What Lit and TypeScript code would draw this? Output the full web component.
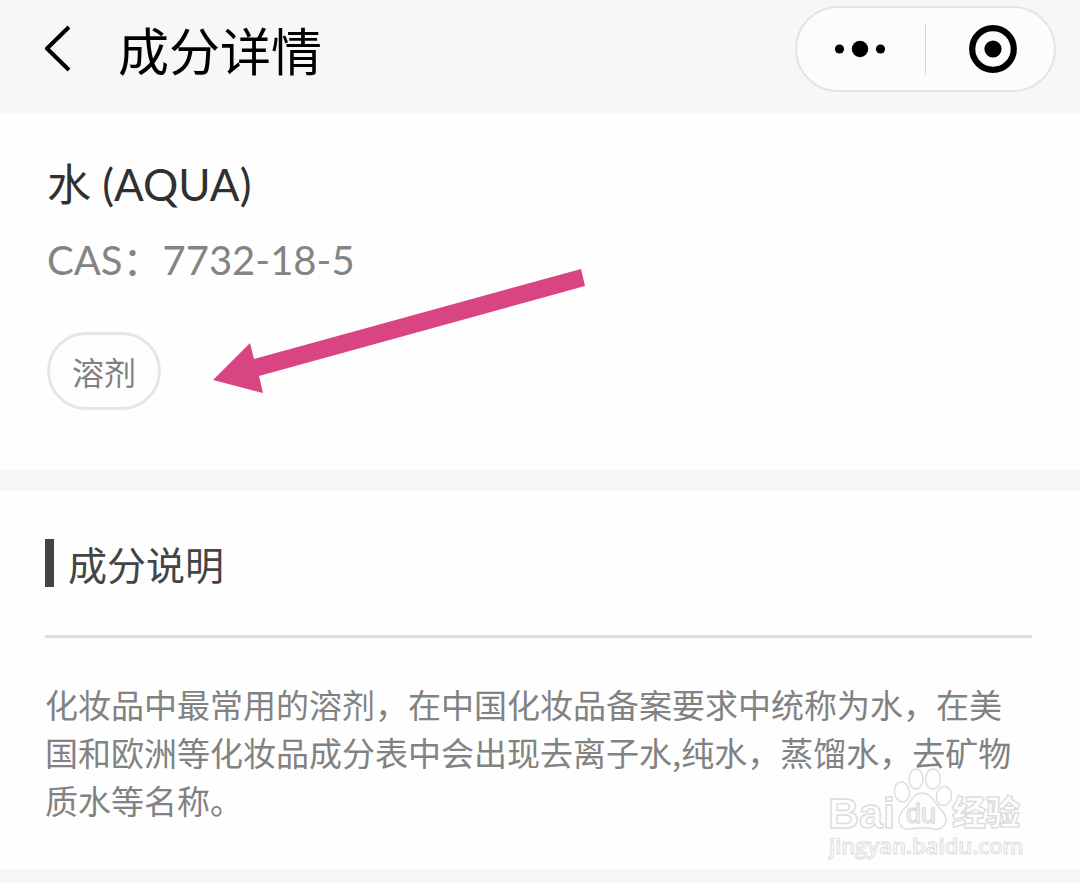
import { LitElement, html, css } from "lit";
import { customElement, property } from "lit/decorators.js";

@customElement("nav-bar")
class NavBar extends LitElement {
  @property() heading = "";

  static styles = css`
    :host {
      display: block;
    }
    .bar {
      display: flex;
      align-items: center;
      height: 98px;
      padding: 0 24px 15px 40px;
      background: #f7f7f7;
      color: #000;
    }
    .back,
    .action {
      display: flex;
      align-items: center;
      justify-content: center;
      margin: 0;
      padding: 0;
      border: 0;
      background: none;
      color: inherit;
      cursor: pointer;
    }
    .back {
      width: 36px;
      height: 60px;
    }
    .title {
      flex: 1;
      margin: 0 0 0 42px;
      font-size: 51px;
      line-height: 72px;
      font-weight: 400;
    }
    .capsule {
      display: flex;
      align-items: center;
      box-sizing: border-box;
      width: 261px;
      height: 86px;
      border: 2px solid #e4e4e4;
      border-radius: 43px;
      background: #fcfcfc;
    }
    .action {
      flex: 1;
      height: 100%;
    }
    .divider {
      width: 1px;
      height: 51px;
      background: #d8d8d8;
    }
  `;

  render() {
    return html`
      <header class="bar">
        <button class="back" aria-label="返回">
          <svg width="36" height="60" viewBox="0 0 36 60" fill="none" stroke="currentColor" stroke-width="4">
            <path d="M29 8 7 29.500 29 51" stroke-linejoin="round" />
          </svg>
        </button>
        <h1 class="title">${this.heading}</h1>
        <div class="capsule">
          <button class="action" aria-label="更多">
            <svg width="54" height="18" viewBox="0 0 54 18" fill="currentColor">
              <circle cx="5.500" cy="9" r="4.600" />
              <circle cx="26" cy="9" r="8.200" />
              <circle cx="46.500" cy="9" r="4.600" />
            </svg>
          </button>
          <span class="divider"></span>
          <button class="action" aria-label="关闭">
            <svg width="54" height="48" viewBox="0 0 54 48" fill="none">
              <circle cx="30" cy="24" r="20.800" stroke="currentColor" stroke-width="6.200" />
              <circle cx="30" cy="24" r="8.600" fill="currentColor" />
            </svg>
          </button>
        </div>
      </header>
    `;
  }
}

@customElement("site-watermark")
class SiteWatermark extends LitElement {
  static styles = css`
    :host {
      display: block;
    }
    .mark {
      display: block;
    }
    .brand {
      font: 700 43px "Liberation Sans", Arial, sans-serif;
    }
    .du {
      font: 400 27px "Liberation Sans", Arial, sans-serif;
    }
    .cjk {
      font: 900 34px "Noto Sans CJK SC", sans-serif;
    }
    .address {
      font: 600 22px "Open Sans", sans-serif;
    }
  `;

  render() {
    return html`
      <svg class="mark" width="212" height="100" viewBox="0 0 212 100" fill="#fefefe" stroke="#dcdcdc" stroke-width="1.400" stroke-linejoin="round">
        <text class="brand" x="0" y="61">Bai</text>
        <ellipse cx="74" cy="25" rx="7.500" ry="10" transform="rotate(-10 74 25)" />
        <ellipse cx="88" cy="12" rx="7" ry="10" />
        <ellipse cx="105" cy="12" rx="7.500" ry="10" />
        <ellipse cx="116" cy="29" rx="7.500" ry="9.500" transform="rotate(12 116 29)" />
        <path d="M94 26c-8 0-11 8-15 13-5 5-9 9-8 15 1 7 6 9 12 8 5-1 7-1 11-1s8 0 12 1c6 1 11-2 12-8 1-6-4-10-8-15-5-6-8-13-16-13Z" />
        <text class="du" x="78" y="56">du</text>
        <text class="cjk" x="124" y="58">经验</text>
        <text class="address" x="1" y="87" stroke-width="1">jingyan.baidu.com</text>
      </svg>
    `;
  }
}

@customElement("app-root")
class AppRoot extends LitElement {
  @property() name = "水 (AQUA)";
  @property() cas = "7732-18-5";
  @property({ attribute: false }) tags = ["溶剂"];
  @property() description =
    "化妆品中最常用的溶剂，在中国化妆品备案要求中统称为水，在美国和欧洲等化妆品成分表中会出现去离子水,纯水，蒸馏水，去矿物质水等名称。";

  static styles = css`
    :host {
      display: block;
      min-height: 100vh;
      background: #f6f6f6;
      font-family: "Noto Sans CJK SC", sans-serif;
    }
    .page {
      display: flex;
      flex-direction: column;
      gap: 21px;
    }
    .summary,
    .details {
      position: relative;
      background: #fefefe;
    }
    .summary {
      padding: 39px 47px 60px;
    }
    .name,
    .cas {
      font-family: Lato, "Noto Sans CJK SC", sans-serif;
    }
    .name {
      margin: 0;
      color: #303030;
      font-size: 44px;
      line-height: 64px;
      font-weight: 400;
    }
    .cas {
      margin: 14px 0 0;
      color: #848484;
      font-size: 40px;
      line-height: 60px;
    }
    .tags {
      display: flex;
      gap: 24px;
      margin: 42px 0 0;
      padding: 0;
      list-style: none;
    }
    .tag {
      padding: 0 22px;
      border: 3px solid #e6e6e6;
      border-radius: 39px;
      color: #808080;
      font-size: 32px;
      line-height: 72px;
    }
    .arrow {
      position: absolute;
      left: 212px;
      top: 154px;
    }
    .details {
      padding: 48px 48px 45px 45px;
    }
    .caption {
      margin: 0;
      padding-left: 14px;
      border-left: 9px solid #444;
      color: #444;
      font-size: 39px;
      line-height: 48px;
      font-weight: 400;
    }
    .text {
      margin: 48px 0 0;
      padding-top: 42px;
      border-top: 3px solid #dedede;
      color: #828282;
      font-size: 33px;
      line-height: 48px;
    }
    .watermark {
      position: absolute;
      right: 40px;
      bottom: 2px;
    }
  `;

  render() {
    return html`
      <nav-bar heading="成分详情"></nav-bar>
      <main class="page">
        <section class="summary">
          <h2 class="name">${this.name}</h2>
          <p class="cas">CAS：${this.cas}</p>
          <ul class="tags">
            ${this.tags.map((tag) => html`<li class="tag">${tag}</li>`)}
          </ul>
          <svg class="arrow" width="376" height="128" viewBox="0 0 376 128" fill="#d94583" aria-hidden="true">
            <path d="M1 113 38 76 42 92 369 2 373 19 47 109 51 126Z" />
          </svg>
        </section>
        <section class="details">
          <h2 class="caption">成分说明</h2>
          <p class="text">${this.description}</p>
          <site-watermark class="watermark"></site-watermark>
        </section>
      </main>
    `;
  }
}
